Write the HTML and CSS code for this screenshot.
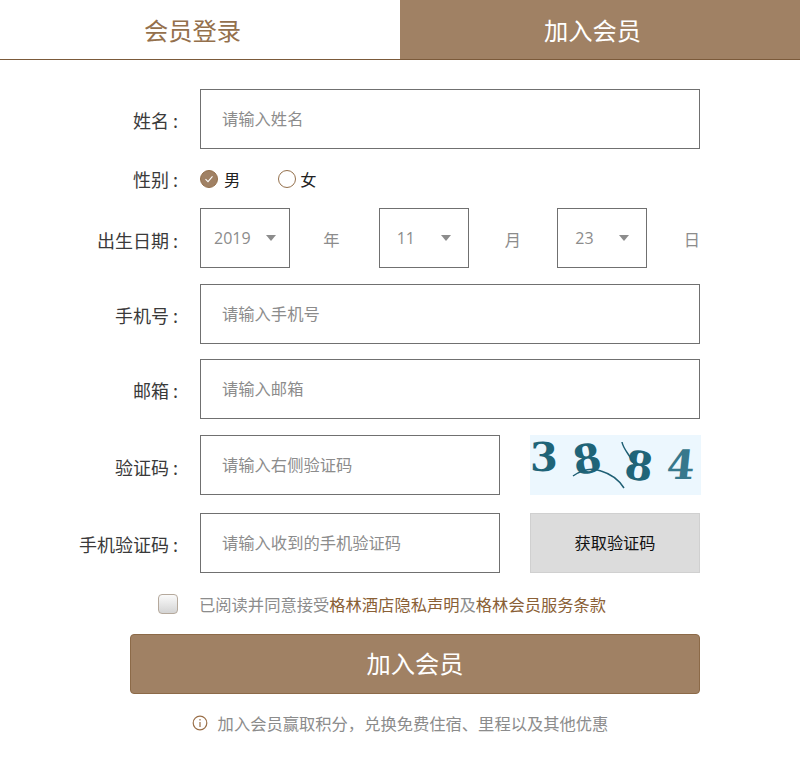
FILE: index.html
```html
<!DOCTYPE html>
<html lang="zh-CN">
<head>
    <meta charset="UTF-8">
    <title>加入会员</title>
    <link rel="stylesheet" href="styles.css">
</head>
<body>
    <div class="tabs">
        <a class="tab">会员登录</a>
        <a class="tab active">加入会员</a>
    </div>

    <form class="join-form">
        <div class="row row-name">
            <label class="label">姓名 :</label>
            <input class="input wide" type="text" placeholder="请输入姓名">
        </div>

        <div class="row row-gender">
            <label class="label gender-label">性别 :</label>
            <span class="radio checked">
                <svg width="12" height="12" viewBox="0 0 12 12"><path d="M2.5 6.2 L5 8.6 L9.5 3.4" fill="none" stroke="#fff" stroke-width="1.1"/></svg>
            </span>
            <span class="radio-text first">男</span>
            <span class="radio"></span>
            <span class="radio-text second">女</span>
        </div>

        <div class="row row-date">
            <label class="label date-label">出生日期 :</label>
            <div class="date">
                <div class="select year"><span>2019</span><i class="arrow"></i></div>
                <span class="unit unit-year">年</span>
                <div class="select"><span>11</span><i class="arrow"></i></div>
                <span class="unit">月</span>
                <div class="select"><span>23</span><i class="arrow"></i></div>
                <span class="unit last">日</span>
            </div>
        </div>

        <div class="row row-phone">
            <label class="label">手机号 :</label>
            <input class="input wide" type="text" placeholder="请输入手机号">
        </div>

        <div class="row row-mail">
            <label class="label">邮箱 :</label>
            <input class="input wide" type="text" placeholder="请输入邮箱">
        </div>

        <div class="row row-code">
            <label class="label date-label">验证码 :</label>
            <input class="input short" type="text" placeholder="请输入右侧验证码">
            <div class="captcha">
                <span class="digit d1">3</span>
                <span class="digit d2">8</span>
                <span class="digit d3">8</span>
                <span class="digit d4">4</span>
                <svg class="captcha-line" width="171" height="60" viewBox="0 0 171 60">
                    <path d="M43 41 C53 34 63 33 71 36 C81 39 89 45 94 53" fill="none" stroke="#1f5f74" stroke-width="1.5"/>
                    <path d="M92 7 C93 14 100 20 104 29" fill="none" stroke="#1f5f74" stroke-width="1.5"/>
                </svg>
            </div>
        </div>

        <div class="row row-sms">
            <label class="label">手机验证码 :</label>
            <input class="input short" type="text" placeholder="请输入收到的手机验证码">
            <button class="sms-btn" type="button">获取验证码</button>
        </div>

        <div class="agree">
            <span class="checkbox"></span>
            <span class="agree-text">已阅读并同意接受<a>格林酒店隐私声明</a>及<a>格林会员服务条款</a></span>
        </div>

        <button class="submit" type="button">加入会员</button>

        <div class="note">
            <svg width="16" height="16" viewBox="0 0 16 16">
                <circle cx="8" cy="8" r="6.8" fill="none" stroke="#9a6f48" stroke-width="1.2"/>
                <path d="M8 7 V12 M8 4 V5.6" stroke="#9a6f48" stroke-width="1.2"/>
            </svg>
            <span>加入会员赢取积分，兑换免费住宿、里程以及其他优惠</span>
        </div>
    </form>
</body>
</html>
```

FILE: styles.css
```css
* {
    margin: 0;
    padding: 0;
    box-sizing: border-box;
}

body {
    background: #fff;
    font-family: "Noto Sans CJK SC", "Open Sans", sans-serif;
    color: #333;
}

.tabs {
    display: flex;
    height: 60px;
    border-bottom: 1px solid #7b5a3a;
}

.tab {
    width: 400px;
    padding-right: 15px;
    font-size: 24.3px;
    line-height: 59px;
    text-align: center;
    color: #94704c;
}

.tab.active {
    background: #a08164;
    color: #fff;
}

.join-form {
    padding-top: 29px;
}

.row {
    display: flex;
    align-items: center;
}

.row-gender {
    height: 59px;
}

.row-phone {
    margin-top: 16px;
}

.row-mail {
    margin-top: 15px;
}

.row-code {
    margin-top: 16px;
}

.row-sms {
    margin-top: 18px;
}

.label {
    width: 178px;
    margin-right: 22px;
    padding-top: 2px;
    font-size: 18px;
    text-align: right;
    white-space: nowrap;
    color: #3a3a3a;
}

.gender-label {
    padding-top: 0;
}

.date-label {
    padding-top: 4px;
}

.input {
    height: 60px;
    border: 1px solid #707070;
    padding: 0 0 2px 21px;
    font-family: inherit;
    font-size: 16.3px;
    outline: none;
}

.input::placeholder {
    color: #8c8c8c;
    opacity: 1;
}

.wide {
    width: 500px;
}

.short {
    width: 300px;
}

.radio {
    display: flex;
    align-items: center;
    justify-content: center;
    width: 18px;
    height: 18px;
    border: 1px solid #94704c;
    border-radius: 50%;
}

.radio.checked {
    background: #a08164;
}

.radio-text {
    margin-left: 6px;
    font-size: 16.3px;
    color: #222;
}

.radio-text.first {
    margin-right: 38px;
}

.radio-text.second {
    margin-left: 4px;
}

.date {
    display: flex;
    align-items: center;
    width: 500px;
}

.select {
    display: flex;
    flex-shrink: 0;
    align-items: center;
    width: 90px;
    height: 60px;
    border: 1px solid #707070;
    padding-left: 17px;
    font-family: "Open Sans", sans-serif;
    font-size: 16px;
    color: #8c8c8c;
}

.select span {
    width: 44px;
}

.select.year {
    padding-left: 13px;
}

.select.year span {
    width: 52px;
}

.arrow {
    width: 0;
    height: 0;
    border-left: 5px solid transparent;
    border-right: 5px solid transparent;
    border-top: 6px solid #8c8c8c;
}

.unit {
    width: 89px;
    padding-top: 2px;
    font-size: 16.3px;
    text-align: center;
    color: #8c8c8c;
}

.unit-year {
    padding-right: 6px;
}

.unit.last {
    width: 53px;
    text-align: right;
}

.captcha {
    position: relative;
    width: 171px;
    height: 60px;
    margin-left: 30px;
    background: #ecf7fe;
}

.digit {
    position: absolute;
    font-family: "DejaVu Serif", serif;
    font-weight: bold;
    font-size: 40px;
    line-height: 1;
    color: #1f6478;
}

.d1 {
    left: 0;
    top: 2px;
}

.d2 {
    left: 43px;
    top: 4px;
    transform: rotate(-10deg);
}

.d3 {
    left: 95px;
    top: 11px;
    transform: rotate(8deg);
}

.d4 {
    left: 137px;
    top: 10px;
    color: #37788c;
    transform: skewX(-6deg);
}

.captcha-line {
    position: absolute;
    left: 0;
    top: 0;
}

.sms-btn {
    width: 170px;
    height: 60px;
    margin-left: 30px;
    padding-bottom: 3px;
    background: #dcdcdc;
    border: 1px solid #d0d0d0;
    font-family: inherit;
    font-size: 16.2px;
    color: #111;
}

.agree {
    display: flex;
    align-items: center;
    height: 61px;
    padding-left: 158px;
}

.checkbox {
    width: 20px;
    height: 20px;
    border: 1px solid #b5a99c;
    border-radius: 4px;
    background: linear-gradient(#fafafa, #d4d4d4);
}

.agree-text {
    margin-left: 21px;
    font-size: 16.3px;
    color: #8c8c8c;
}

.agree-text a {
    color: #8a6036;
}

.submit {
    display: block;
    width: 570px;
    height: 60px;
    margin-left: 130px;
    padding-bottom: 4px;
    background: #a08164;
    border: 1px solid #8c6a48;
    border-radius: 4px;
    font-family: inherit;
    font-size: 24.3px;
    color: #fff;
}

.note {
    display: flex;
    align-items: center;
    justify-content: center;
    margin-top: 17px;
    font-size: 16.3px;
    color: #8c8c8c;
}

.note svg {
    margin-right: 10px;
}
```
